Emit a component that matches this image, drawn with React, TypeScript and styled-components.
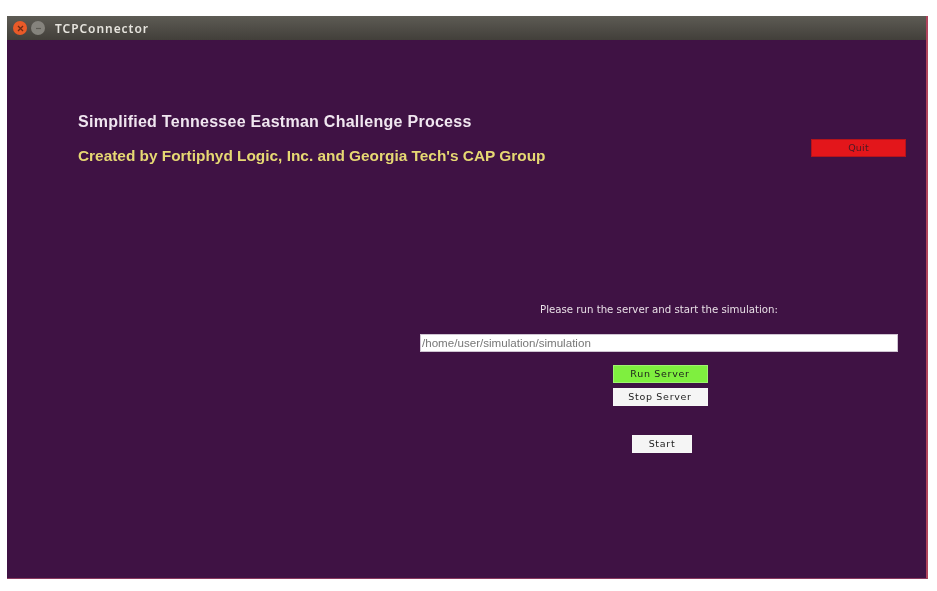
import React from 'react';
import styled, { createGlobalStyle } from 'styled-components';

const Global = createGlobalStyle`
  html, body { margin: 0; padding: 0; background: #fff; }
  body { width: 937px; height: 591px; overflow: hidden; font-family: "Liberation Sans", Arial, sans-serif; }
`;

const Page = styled.div`
  box-sizing: border-box;
  width: 937px;
  height: 591px;
  padding: 16px 0 0 7px;
`;

const Window = styled.div`
  display: flex;
  flex-direction: column;
  box-sizing: border-box;
  width: 921px;
  height: 563px;
  background: #3f1244;
  border-right: 2px solid #b0445c;
  border-bottom: 1px solid #8a3a60;
  filter: blur(0.6px);
`;

const TitleBar = styled.div`
  display: flex;
  align-items: center;
  flex: 0 0 24px;
  padding-left: 6px;
  background: linear-gradient(#5d5b54, #423f3a);
`;

const WindowDot = styled.span<{ $color: string }>`
  width: 14px;
  height: 14px;
  margin-right: 4px;
  border-radius: 50%;
  background: ${p => p.$color};
  display: flex;
  align-items: center;
  justify-content: center;
`;

const WindowTitle = styled.span`
  margin-left: 6px;
  font-family: "Noto Sans", sans-serif;
  font-size: 12px;
  font-weight: 600;
  letter-spacing: 0.95px;
  color: #e6e4de;
`;

const Content = styled.div`
  flex: 1;
  display: flex;
  flex-direction: column;
`;

const Header = styled.div`
  display: flex;
  justify-content: space-between;
  padding: 72px 20px 0 71px;
`;

const Headings = styled.div`
  display: flex;
  flex-direction: column;
  gap: 15px;
`;

const Heading = styled.div<{ $color: string; $size: number; $spacing: number }>`
  font-size: ${p => p.$size}px;
  line-height: 19px;
  font-weight: 700;
  letter-spacing: ${p => p.$spacing}px;
  white-space: nowrap;
  color: ${p => p.$color};
`;

const Button = styled.button<{ $bg: string; $w: number }>`
  box-sizing: border-box;
  display: block;
  width: ${p => p.$w}px;
  height: 18px;
  padding: 0;
  border: 1px solid rgba(255, 255, 255, 0.25);
  background: ${p => p.$bg};
  color: #1c1c1c;
  font-family: "DejaVu Sans", sans-serif;
  font-size: 9.5px;
  letter-spacing: 0.7px;
  line-height: 16px;
  text-align: center;
`;

const QuitButton = styled(Button)`
  margin-top: 27px;
  border-color: #b3141c;
  color: #4a1a24;
  letter-spacing: 0.2px;
`;

const ServerPanel = styled.div`
  display: flex;
  flex-direction: column;
  align-items: center;
  width: 478px;
  margin: 139px 0 0 413px;
`;

const Prompt = styled.div`
  font-family: "DejaVu Sans", sans-serif;
  font-size: 10.2px;
  line-height: 12px;
  color: #e8dfe6;
  white-space: nowrap;
`;

const PathField = styled.div`
  box-sizing: border-box;
  width: 478px;
  height: 18px;
  margin-top: 18px;
  padding-left: 1px;
  background: #fff;
  border: 1px solid #cfc4d2;
  color: #777;
  font-size: 11.6px;
  line-height: 16px;
`;

const ServerButtons = styled.div`
  display: flex;
  flex-direction: column;
  gap: 5px;
  margin: 13px 0 0 2px;
`;

const StartButton = styled(Button)`
  margin-top: 29px;
  margin-left: 6px;
`;

export default function App() {
  return (
    <>
      <Global />
      <Page>
        <Window>
          <TitleBar>
            <WindowDot $color="#ea5a28">
              <svg width="7" height="7" viewBox="0 0 7 7">
                <path d="M1 1l5 5M6 1L1 6" stroke="#6d2a14" strokeWidth="1.3" />
              </svg>
            </WindowDot>
            <WindowDot $color="#85837d">
              <svg width="7" height="7" viewBox="0 0 7 7">
                <path d="M1 3.5h5" stroke="#5d5b55" strokeWidth="1.2" />
              </svg>
            </WindowDot>
            <WindowTitle>TCPConnector</WindowTitle>
          </TitleBar>
          <Content>
            <Header>
              <Headings>
                <Heading $color="#f0e6f0" $size={16} $spacing={0.27}>Simplified Tennessee Eastman Challenge Process</Heading>
                <Heading $color="#e6d873" $size={15.4} $spacing={0}>Created by Fortiphyd Logic, Inc. and Georgia Tech's CAP Group</Heading>
              </Headings>
              <QuitButton $bg="#e3161b" $w={95}>Quit</QuitButton>
            </Header>
            <ServerPanel>
              <Prompt>Please run the server and start the simulation:</Prompt>
              <PathField>/home/user/simulation/simulation</PathField>
              <ServerButtons>
                <Button $bg="#7fef3f" $w={95}>Run Server</Button>
                <Button $bg="#f5f5f5" $w={95}>Stop Server</Button>
              </ServerButtons>
              <StartButton $bg="#f5f5f5" $w={60}>Start</StartButton>
            </ServerPanel>
          </Content>
        </Window>
      </Page>
    </>
  );
}
